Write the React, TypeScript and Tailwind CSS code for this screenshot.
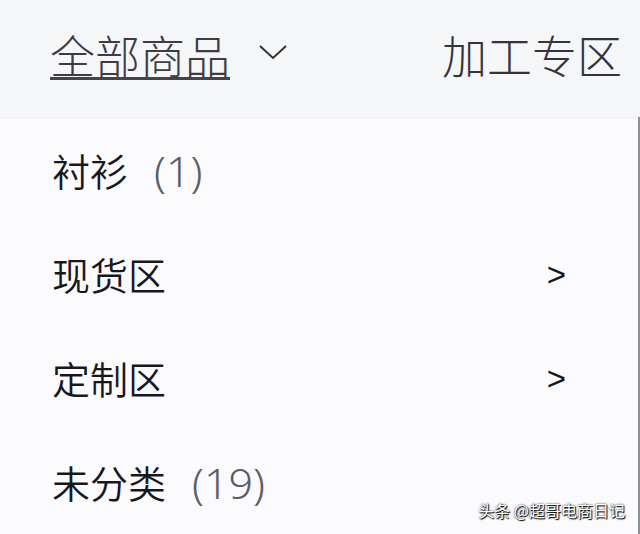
const cjk = "font-['Noto_Sans_CJK_SC','Noto_Sans',sans-serif]";

interface Item {
  name: string;
  count?: number;
  sub?: boolean;
}

const items: Item[] = [
  { name: '衬衫', count: 1 },
  { name: '现货区', sub: true },
  { name: '定制区', sub: true },
  { name: '未分类', count: 19 },
];

function Chevron() {
  return (
    <svg width="28" height="16" viewBox="0 0 28 16" className="ml-[29px] mt-[-6px]">
      <polyline points="1,2 14,14 27,2" fill="none" stroke="#333" strokeWidth="2" />
    </svg>
  );
}

export default function App() {
  return (
    <div className={`relative w-[640px] h-[534px] overflow-hidden bg-[#fbfbfe] ${cjk}`}>
      <div className="flex h-[117px] items-center bg-[#f5f6f8] pl-[50px] pr-[18px] pb-[8px] shadow-[0_1px_2px_rgba(0,0,0,0.06)]">
        <span className="text-[45px] font-light leading-none text-[#3e3b43] underline decoration-[#46434b] decoration-[3px] underline-offset-[3px]">
          全部商品
        </span>
        <Chevron />
        <span className="ml-auto text-[45px] font-light leading-none text-[#36333b]">加工专区</span>
      </div>
      <div className="flex flex-col border-r-2 border-[#8e8e98] pt-[1px] h-[417px]">
        {items.map((it) => (
          <div key={it.name} className="flex h-[104px] items-center pl-[52px] pr-[72px]">
            <span className="text-[38px] font-[350] leading-none text-[#18181c]">{it.name}</span>
            {it.count !== undefined && (
              <span className="ml-[26px] font-['Noto_Sans',sans-serif] text-[43px] font-light leading-none text-[#5f5d66]">
                ({it.count})
              </span>
            )}
            {it.sub && (
              <span className="ml-auto font-['Liberation_Sans',sans-serif] text-[33px] leading-none text-[#18181c]">
                &gt;
              </span>
            )}
          </div>
        ))}
      </div>
      <div className="absolute right-[15px] bottom-[16px] text-[16px] leading-none text-white [text-shadow:0_0_2px_#000,1px_1px_1px_#000]">
        头条 @超哥电商日记
      </div>
    </div>
  );
}
